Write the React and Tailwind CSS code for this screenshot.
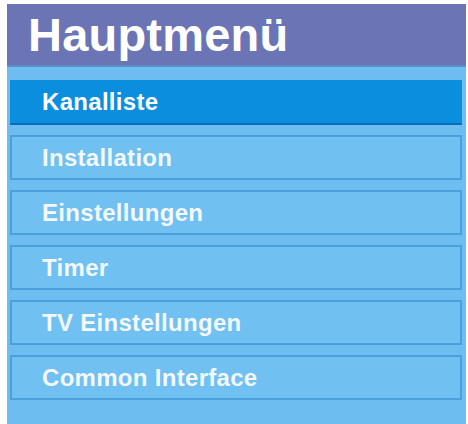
import React from "react";

const items = [
  "Kanalliste",
  "Installation",
  "Einstellungen",
  "Timer",
  "TV Einstellungen",
  "Common Interface",
];

export default function App() {
  return (
    <div
      className="w-[468px] h-[424px] bg-white pl-[7px] pr-[2px] pt-[4px] overflow-hidden"
      style={{ fontFamily: '"Liberation Sans", Arial, sans-serif' }}
    >
      <div className="h-full bg-[#6dbdf0] flex flex-col">
        <div className="h-[63px] bg-[#6b74b5] flex items-center pl-[21px] border-b-[2px] border-[#5c8fc9]">
          <h1 className="text-[47px] font-bold text-white leading-none tracking-[0.2px]">
            Hauptmenü
          </h1>
        </div>
        <ul className="flex flex-col gap-[10px] pl-[3px] pr-[4px] pt-[13px]">
          {items.map((label, i) =>
            i === 0 ? (
              <li
                key={label}
                className="h-[45px] flex items-center pl-[32px] bg-[#0b8ede] border-b-[2px] border-[#0a6fb8] text-white text-[24px] font-bold tracking-[0.3px]"
              >
                {label}
              </li>
            ) : (
              <li
                key={label}
                className="h-[45px] flex items-center pl-[30px] bg-[#70c0f2] border-[2px] border-[#4aa0dc] text-[#f3f9ff] text-[24px] font-bold tracking-[0.3px]"
              >
                {label}
              </li>
            )
          )}
        </ul>
      </div>
    </div>
  );
}
